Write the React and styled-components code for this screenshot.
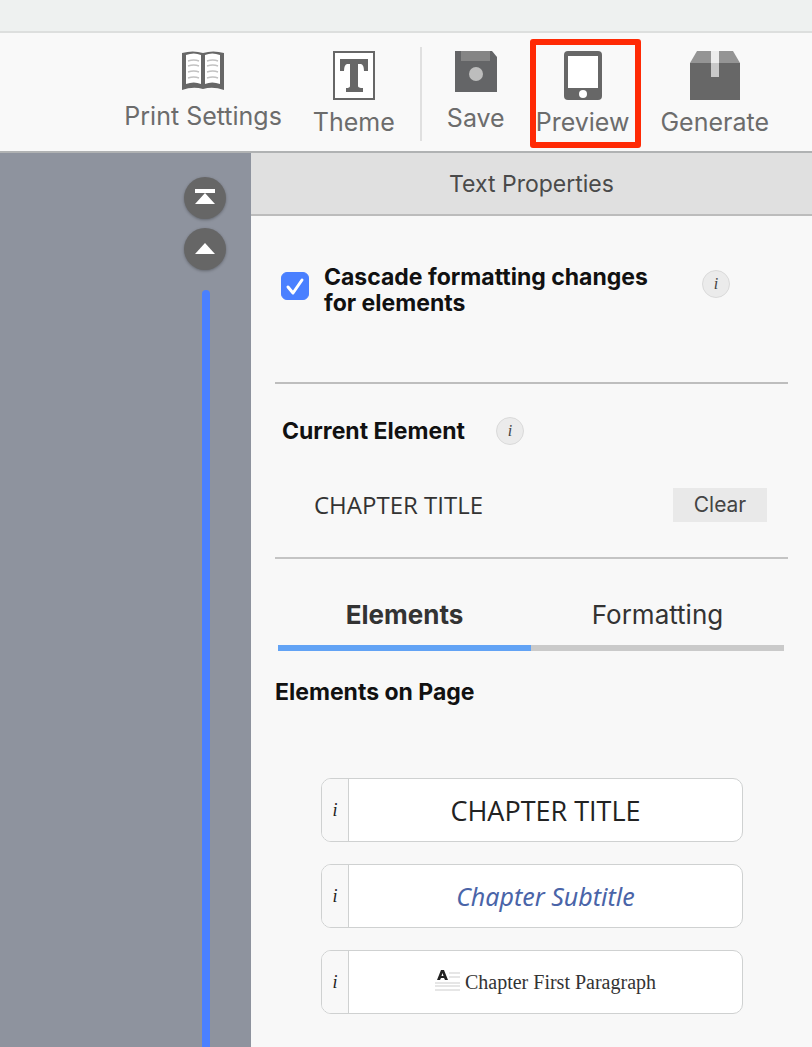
import React, { useState } from 'react'
import styled, { createGlobalStyle } from 'styled-components'

const tools = [
  { name: 'Print Settings', Icon: BookIcon },
  { name: 'Theme', Icon: ThemeIcon },
  { name: 'Save', Icon: SaveIcon, divided: true },
  { name: 'Preview', Icon: TabletIcon, highlighted: true },
  { name: 'Generate', Icon: BoxIcon },
]

const tabs = ['Elements', 'Formatting']

export default function App() {
  const [cascade, setCascade] = useState(true)
  const [activeTab, setActiveTab] = useState('Elements')

  return (
    <Page>
      <GlobalStyle />
      <WindowStrip />
      <Toolbar>
        {tools.map(({ name, Icon, divided, highlighted }) => (
          <React.Fragment key={name}>
            {divided && <Divider />}
            <Tool type="button" $highlighted={highlighted}>
              <Icon />
              <span>{name}</span>
            </Tool>
          </React.Fragment>
        ))}
      </Toolbar>
      <Workspace>
        <Canvas>
          <RoundButton type="button" aria-label="First page">
            <svg width="24" height="20" viewBox="0 0 24 20" fill="#fff">
              <path d="M2 1h20v4H2zM12 5l10 11H2z" />
            </svg>
          </RoundButton>
          <RoundButton type="button" aria-label="Previous page">
            <svg width="24" height="20" viewBox="0 0 24 20" fill="#fff">
              <path d="M12 4l10 11H2z" />
            </svg>
          </RoundButton>
          <PageTrack />
        </Canvas>
        <Panel>
          <PanelHeader>Text Properties</PanelHeader>
          <PanelBody>
            <CascadeSection>
              <CheckLabel>
                <input type="checkbox" checked={cascade} onChange={() => setCascade(!cascade)} />
                <span>Cascade formatting changes for elements</span>
              </CheckLabel>
              <InfoButton type="button" aria-label="About cascading">i</InfoButton>
            </CascadeSection>
            <CurrentSection>
              <CurrentHeading>
                <Heading>Current Element</Heading>
                <InfoButton type="button" aria-label="About the current element">i</InfoButton>
              </CurrentHeading>
              <CurrentRow>
                <CurrentName>CHAPTER TITLE</CurrentName>
                <ClearButton type="button">Clear</ClearButton>
              </CurrentRow>
            </CurrentSection>
            <Tabs role="tablist">
              {tabs.map((tab) => (
                <Tab
                  key={tab}
                  type="button"
                  role="tab"
                  aria-selected={tab === activeTab}
                  $active={tab === activeTab}
                  onClick={() => setActiveTab(tab)}
                >
                  {tab}
                </Tab>
              ))}
            </Tabs>
            <Heading>Elements on Page</Heading>
            <ElementList>
              <ElementCard>
                <CardInfo type="button" aria-label="About Chapter Title">i</CardInfo>
                <CardName type="button" $variant="title">CHAPTER TITLE</CardName>
              </ElementCard>
              <ElementCard>
                <CardInfo type="button" aria-label="About Chapter Subtitle">i</CardInfo>
                <CardName type="button" $variant="subtitle">Chapter Subtitle</CardName>
              </ElementCard>
              <ElementCard>
                <CardInfo type="button" aria-label="About Chapter First Paragraph">i</CardInfo>
                <CardName type="button" $variant="paragraph">
                  <DropCapIcon />
                  Chapter First Paragraph
                </CardName>
              </ElementCard>
            </ElementList>
          </PanelBody>
        </Panel>
      </Workspace>
    </Page>
  )
}

function BookIcon() {
  return (
    <svg width="42" height="43" viewBox="0 0 42 43">
      <path d="M0 2Q11-1 21 2Q31-1 42 2V39Q31 35 21 38Q11 35 0 39z" fill="#676767" />
      <path d="M4 4Q12 1 19 4V33Q12 30 4 33zM23 4Q30 1 38 4V33Q30 30 23 33z" fill="#fff" />
      <path
        d="M6 10q6-2 11 0M6 15q6-2 11 0M6 21q6-2 11 0M6 27q6-2 11 0M25 10q6-2 11 0M25 15q6-2 11 0M25 21q6-2 11 0M25 27q6-2 11 0"
        fill="none"
        stroke="#c2c2c2"
        strokeWidth="1.5"
      />
    </svg>
  )
}

function ThemeIcon() {
  return (
    <svg width="42" height="49" viewBox="0 0 42 49">
      <rect x="1" y="1" width="40" height="47" fill="#fff" stroke="#676767" strokeWidth="2" />
      <path d="M7 8h28v12h-4q0-6-3-7h-3v22q0 2 5 2v4H13v-4q4 0 4-2V13h-3q-3 1-3 7H7z" fill="#676767" />
    </svg>
  )
}

function SaveIcon() {
  return (
    <svg width="42" height="45" viewBox="0 0 42 45">
      <path d="M0 0H37L42 6V41H0z" fill="#646567" />
      <path d="M6 0h29v10H6z" fill="#858585" />
      <circle cx="21" cy="23" r="7" fill="#bdbdbd" />
    </svg>
  )
}

function TabletIcon() {
  return (
    <svg width="38" height="49" viewBox="0 0 38 49">
      <rect width="38" height="49" rx="4" fill="#676767" />
      <path d="M4 5h30v32H4z" fill="#fff" />
      <circle cx="19" cy="43" r="4" fill="#fff" />
    </svg>
  )
}

function BoxIcon() {
  return (
    <svg width="50" height="49" viewBox="0 0 50 49">
      <path d="M7 0H43L50 12H0z" fill="#949494" />
      <path d="M0 12H50V49H0z" fill="#676767" />
      <path d="M21 0h8v12h-8z" fill="#ececec" />
      <path d="M21 12h8v14h-8z" fill="#c9c9c9" />
    </svg>
  )
}

function DropCapIcon() {
  return (
    <svg width="26" height="28" viewBox="0 0 26 28">
      <path d="M14 5h11M14 9h11M0 15h25M0 18h25M0 22h25" stroke="#cdcdcd" strokeWidth="1.2" />
      <path d="M2 12L6 2h3l4 10h-3l-1-2H6l-1 2zM6.500 8h2L7.500 5z" fill="#222" fillRule="evenodd" />
    </svg>
  )
}

const GlobalStyle = createGlobalStyle`
  * {
    box-sizing: border-box;
  }

  body {
    margin: 0;
    background: #f8f8f8;
    font-family: Inter, "Liberation Sans", sans-serif;
  }

  button {
    margin: 0;
    padding: 0;
    border: 0;
    background: none;
    font-family: inherit;
    cursor: pointer;
  }
`

const Page = styled.div`
  display: flex;
  flex-direction: column;
  min-height: 100vh;
`

const WindowStrip = styled.div`
  height: 33px;
  background: #eef1f0;
  border-bottom: 2px solid #dddfde;
`

const Toolbar = styled.header`
  display: flex;
  justify-content: flex-end;
  align-items: flex-start;
  gap: 31px;
  height: 120px;
  padding: 18px 43px 0 16px;
  background: #f9f9f9;
  border-bottom: 2px solid #b0b2b3;
`

const Tool = styled.button`
  position: relative;
  display: flex;
  flex-direction: column;
  align-items: center;
  gap: 8px;
  color: #6c6c6c;
  font-size: 25px;
  line-height: 28px;
  white-space: nowrap;

  svg {
    display: block;
  }

  ${({ $highlighted }) =>
    $highlighted &&
    `
    &::after {
      content: "";
      position: absolute;
      inset: -12px -12px -12px -6px;
      border: 6px solid #ff2a05;
      border-radius: 3px;
    }
  `}
`

const Divider = styled.div`
  width: 2px;
  height: 94px;
  margin: -4px -6px 0;
  background: #e0e0e0;
`

const Workspace = styled.main`
  display: flex;
  flex: 1;
`

const Canvas = styled.div`
  display: flex;
  flex-direction: column;
  align-items: flex-end;
  gap: 9px;
  flex: 0 0 251px;
  padding: 24px 25px 0 0;
  background: #8e939e;
`

const RoundButton = styled.button`
  display: flex;
  align-items: center;
  justify-content: center;
  width: 42px;
  height: 42px;
  border-radius: 50%;
  background: #666;
  box-shadow: 0 1px 3px rgba(0, 0, 0, 0.3);
`

const PageTrack = styled.div`
  flex: 1;
  width: 8px;
  margin: 11px 16px 0 0;
  border-radius: 4px 4px 0 0;
  background: #4a80ff;
`

const Panel = styled.section`
  flex: 1;
  min-width: 0;
  background: #f8f8f8;
`

const PanelHeader = styled.h1`
  height: 63px;
  margin: 0;
  border-bottom: 2px solid #bcbcbc;
  background: #e0e0e0;
  color: #4a4a4a;
  font-size: 23px;
  font-weight: 400;
  line-height: 62px;
  text-align: center;
`

const PanelBody = styled.div`
  padding: 48px 24px 32px;
`

const CascadeSection = styled.div`
  display: flex;
  align-items: flex-start;
  justify-content: space-between;
  min-height: 120px;
  padding: 0 58px 0 6px;
  border-bottom: 2px solid #bebebe;
`

const CheckLabel = styled.label`
  display: flex;
  align-items: flex-start;
  gap: 15px;
  max-width: 388px;
  color: #111;
  font-size: 23px;
  font-weight: 700;
  line-height: 26px;

  input {
    flex: none;
    appearance: none;
    width: 28px;
    height: 28px;
    margin: 8px 0 0;
    border: 1px solid #bbb;
    border-radius: 6px;
    background: #fff;
  }

  input:checked {
    border-color: #4a80ff;
    background: #4a80ff
      url("data:image/svg+xml,%3Csvg xmlns='http://www.w3.org/2000/svg' viewBox='0 0 26 26'%3E%3Cpath d='M6 14l5 6L20 7' fill='none' stroke='white' stroke-width='3' stroke-linecap='round' stroke-linejoin='round'/%3E%3C/svg%3E");
  }
`

const InfoButton = styled.button`
  flex: none;
  width: 28px;
  height: 28px;
  margin-top: 6px;
  border: 1px solid #dadada;
  border-radius: 50%;
  background: #ebebeb;
  color: #444;
  font-family: "Liberation Serif", serif;
  font-size: 16px;
  font-style: italic;
  line-height: 26px;
`

const CurrentSection = styled.div`
  padding: 27px 21px 35px 7px;
  border-bottom: 2px solid #c4c4c4;
`

const CurrentHeading = styled.div`
  display: flex;
  align-items: center;
  gap: 31px;

  button {
    margin: 0;
  }
`

const Heading = styled.h2`
  margin: 0;
  color: #111;
  font-size: 23px;
  font-weight: 700;
  line-height: 40px;
`

const CurrentRow = styled.div`
  display: flex;
  align-items: center;
  justify-content: space-between;
  padding: 37px 0 0 32px;
`

const CurrentName = styled.span`
  color: #333;
  font-family: "Open Sans", sans-serif;
  font-size: 24px;
  line-height: 34px;
`

const ClearButton = styled.button`
  width: 94px;
  height: 34px;
  background: #e9e9e9;
  color: #444;
  font-size: 21px;
  line-height: 34px;
`

const Tabs = styled.div`
  display: flex;
  margin: 36px 4px 21px 3px;
`

const Tab = styled.button`
  flex: 1;
  padding-bottom: 10px;
  border-bottom: 6px solid ${({ $active }) => ($active ? '#62a3f5' : '#cacaca')};
  color: #333;
  font-size: 26px;
  font-weight: ${({ $active }) => ($active ? 700 : 400)};
  line-height: 40px;
`

const ElementList = styled.div`
  display: flex;
  flex-direction: column;
  gap: 22px;
  padding: 66px 45px 0 46px;
`

const ElementCard = styled.div`
  display: flex;
  height: 64px;
  overflow: hidden;
  border: 1px solid #cfd1d1;
  border-radius: 10px;
  background: #fff;
`

const CardInfo = styled.button`
  flex: 0 0 27px;
  border-right: 1px solid #cfd1d1;
  background: #f8f8f8;
  color: #222;
  font-family: "Liberation Serif", serif;
  font-size: 18px;
  font-style: italic;
`

const variants = {
  title: 'color: #222; font: 500 27px "Open Sans", sans-serif;',
  subtitle: 'color: #4a64a8; font: italic 400 25px "Noto Sans", sans-serif;',
  paragraph: 'color: #333; font: 400 20px "Liberation Serif", serif;',
}

const CardName = styled.button`
  display: flex;
  flex: 1;
  align-items: center;
  justify-content: center;
  gap: 4px;
  ${({ $variant }) => variants[$variant]}
`
